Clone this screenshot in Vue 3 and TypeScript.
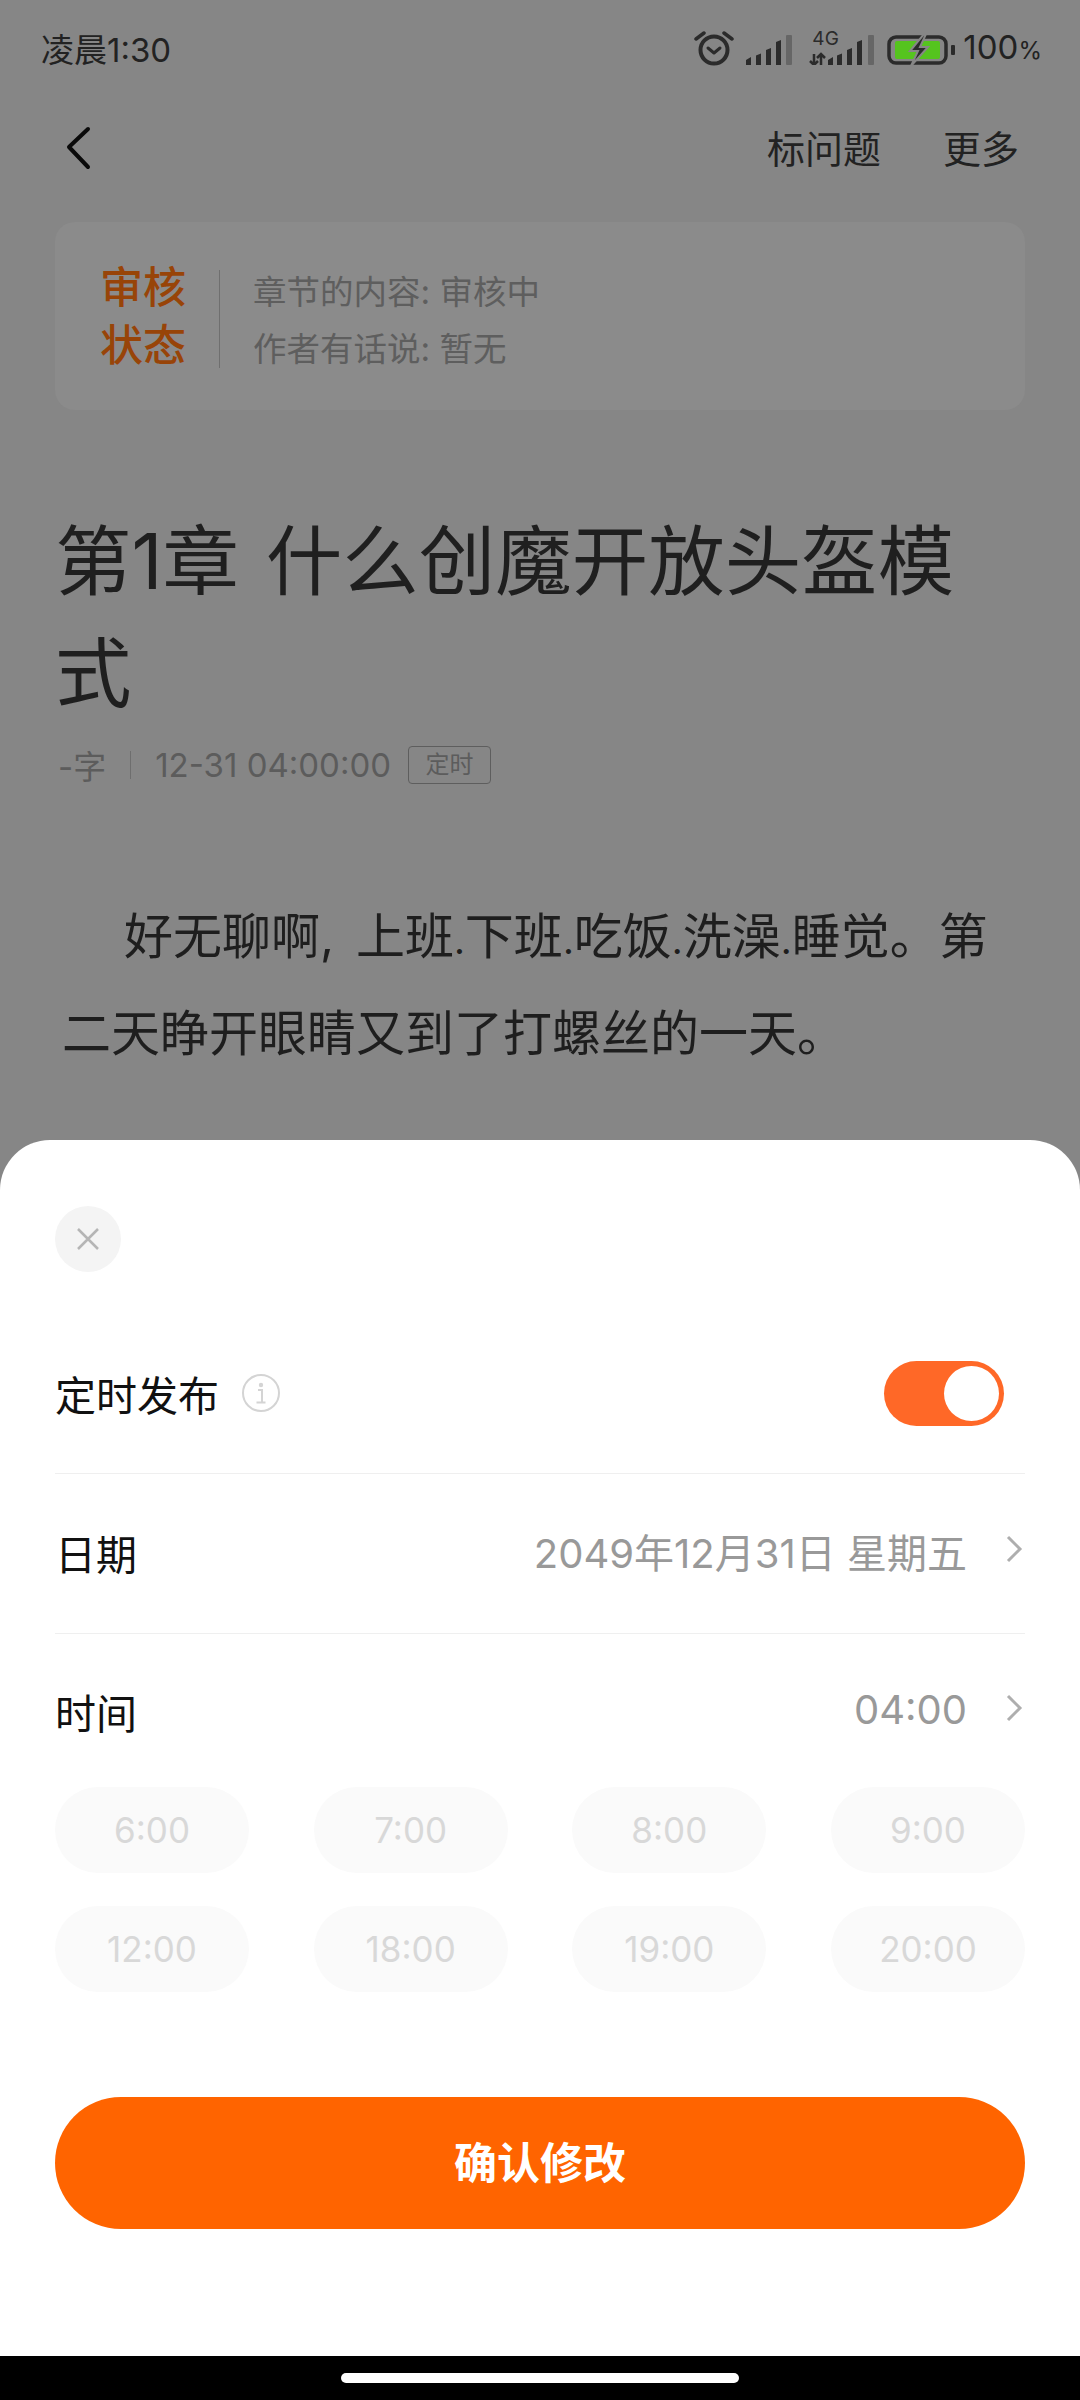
<template>
  <div class="screen">
    <div class="page">
      <div class="status">
        <span class="clock">凌晨1:30</span>
        <div class="status-icons">
          <svg class="alarm" width="40" height="36" viewBox="0 0 40 36">
            <circle cx="20" cy="20" r="13.500" fill="none" stroke="#2b2b2b" stroke-width="4" />
            <path d="M14 18l6 5 6-5" fill="none" stroke="#2b2b2b" stroke-width="3" stroke-linecap="round" stroke-linejoin="round" />
            <path d="M2 9l8-6M38 9l-8-6" fill="none" stroke="#2b2b2b" stroke-width="3.500" stroke-linecap="round" />
          </svg>
          <svg class="bars" width="48" height="30" viewBox="0 0 48 30">
            <path d="M1 25l5-3v8H1zM11 20.500l5-2V30h-5zM21 15l5-2v17h-5zM31 7l5-2v25h-5z" fill="#2b2b2b" />
            <rect x="41" y="0" width="6" height="30" rx="1" fill="#666" />
          </svg>
          <div class="net">
            <span class="net-label">4G</span>
            <svg class="net-bars" width="66" height="30" viewBox="0 0 66 30">
              <path d="M5 19v11M1 26l4 4 4-4M12 30V19M8 23l4-4 4 4" fill="none" stroke="#2b2b2b" stroke-width="2.500" />
              <path d="M19 25l5-3v8h-5zM28 20.500l5-2V30h-5zM38 15l5-2v17h-5zM48 7l5-2v25h-5z" fill="#2b2b2b" />
              <rect x="59" y="0" width="6" height="30" rx="1" fill="#666" />
            </svg>
          </div>
          <svg class="battery" width="68" height="32" viewBox="0 -1 68 32">
            <rect x="2" y="2" width="57" height="26" rx="7" fill="none" stroke="#2b2b2b" stroke-width="3.500" />
            <rect x="8" y="6" width="45" height="18" rx="2" fill="#55c41e" />
            <path d="M37 -1L23 16h8l-7 15 17-19h-8l6-13z" fill="#2b2b2b" stroke="#868686" stroke-width="2" />
            <rect x="64" y="10" width="4" height="10" rx="1" fill="#2b2b2b" />
          </svg>
          <span class="percent">100<small>%</small></span>
        </div>
      </div>

      <div class="nav">
        <svg class="back" width="28" height="44" viewBox="0 0 28 44">
          <path d="M24 3L5 21l19 20" fill="none" stroke="#0a0a0a" stroke-width="4" stroke-linecap="round" stroke-linejoin="round" />
        </svg>
        <div class="nav-actions">
          <span>标问题</span>
          <span>更多</span>
        </div>
      </div>

      <div class="review">
        <div class="review-label">审核<br />状态</div>
        <i class="review-sep"></i>
        <div class="review-lines">
          <div>章节的内容: 审核中</div>
          <div>作者有话说: 暂无</div>
        </div>
      </div>

      <h1 class="title">第1章 什么创魔开放头盔模<br />式</h1>

      <div class="meta">
        <span>-字</span>
        <i class="meta-sep"></i>
        <span>12-31 04:00:00</span>
        <span class="tag">定时</span>
      </div>

      <p class="para">好无聊啊, 上班<span class="dot">.</span>下班<span class="dot">.</span>吃饭<span class="dot">.</span>洗澡<span class="dot">.</span>睡觉。第<br />二天睁开眼睛又到了打螺丝的一天。</p>
      <p class="para next">闹钟响了又响，窗外的天还没有亮起来。</p>
    </div>

    <div class="sheet">
      <div class="close">
        <svg width="22" height="22" viewBox="0 0 22 22">
          <path d="M1 1l20 20M21 1L1 21" stroke="#b5b5b5" stroke-width="2.500" fill="none" />
        </svg>
      </div>

      <div class="row first">
        <div class="row-left">
          <span class="row-name">定时发布</span>
          <svg class="info" width="40" height="40" viewBox="0 0 40 40">
            <circle cx="20" cy="20" r="18" fill="none" stroke="#d4d4d4" stroke-width="2" />
            <circle cx="20" cy="12" r="2.200" fill="#d4d4d4" />
            <path d="M17 17h4v12M15.500 29.500h9" fill="none" stroke="#d4d4d4" stroke-width="2" />
          </svg>
        </div>
        <div class="switch"><div class="knob"></div></div>
      </div>

      <div class="row mid">
        <span class="row-name">日期</span>
        <div class="row-value">
          <span>2049年12月31日 星期五</span>
          <svg width="18" height="28" viewBox="0 0 18 28"><path d="M3 2l12 12L3 26" fill="none" stroke="#aeaeae" stroke-width="3" /></svg>
        </div>
      </div>

      <div class="row last">
        <span class="row-name">时间</span>
        <div class="row-value">
          <span>04:00</span>
          <svg width="18" height="28" viewBox="0 0 18 28"><path d="M3 2l12 12L3 26" fill="none" stroke="#aeaeae" stroke-width="3" /></svg>
        </div>
      </div>

      <div class="chips">
        <div v-for="t in times" :key="t" class="chip">{{ t }}</div>
      </div>

      <div class="confirm">确认修改</div>
    </div>

    <div class="home-bar"><div class="home-pill"></div></div>
  </div>
</template>

<script setup lang="ts">
const times: string[] = ['6:00', '7:00', '8:00', '9:00', '12:00', '18:00', '19:00', '20:00']
</script>

<style>
html, body { margin: 0; background: #000; }
</style>

<style scoped>
.screen {
  position: relative;
  width: 1080px;
  height: 2400px;
  overflow: hidden;
  background: #868686;
  font-family: Inter, "Noto Sans CJK SC", sans-serif;
}
.status {
  height: 100px;
  padding: 0 38px 0 41px;
  display: flex;
  align-items: center;
  justify-content: space-between;
  color: #222;
}
.clock { font-size: 33px; margin-top: -4px; }
.status-icons { display: flex; align-items: center; }
.alarm { margin-right: 11px; margin-top: -4px; }
.bars { margin-right: 16px; }
.net { position: relative; display: flex; margin-right: 12px; }
.net-label { position: absolute; left: 3px; top: -7px; font-size: 19px; line-height: 22px; color: #2b2b2b; }
.battery { margin-right: 8px; }
.percent { font-size: 33px; line-height: 34px; margin-top: -2px; }
.percent small { font-size: 24px; }
.nav {
  height: 98px;
  padding: 0 61px 0 64px;
  display: flex;
  align-items: center;
  justify-content: space-between;
}
.back { margin-top: -2px; }
.nav-actions { display: flex; gap: 62px; font-size: 38px; color: #222; margin-top: -6px; }
.review {
  margin: 24px 55px 0;
  height: 188px;
  padding-left: 45px;
  box-sizing: border-box;
  background: #8b8b8b;
  border-radius: 20px;
  display: flex;
  align-items: center;
}
.review-label {
  font-family: "Liberation Serif", "Noto Sans CJK SC", serif;
  font-size: 43px;
  line-height: 58px;
  font-weight: 500;
  color: #984408;
  padding-top: 3px;
}
.review-sep { width: 1px; height: 98px; background: #6f6f6f; margin: 6px 33px 0; }
.review-lines {
  padding-top: 9px;
  font-size: 33.500px;
  line-height: 57px;
  color: #5e5e5e;
}
.title {
  margin: 95px 0 0 55px;
  font-size: 76.500px;
  line-height: 112px;
  font-weight: 400;
  word-spacing: 5px;
  color: #1f1f1f;
}
.meta {
  margin: 17px 0 0 58px;
  height: 38px;
  display: flex;
  align-items: center;
  font-size: 33px;
  color: #5c5c5c;
}
.meta-sep { width: 1px; height: 28px; background: #6e6e6e; margin: 0 24px; }
.tag {
  margin-left: 17px;
  width: 83px;
  height: 38px;
  box-sizing: border-box;
  border: 1px solid #5e5e5e;
  border-radius: 4px;
  font-size: 24px;
  line-height: 36px;
  text-align: center;
}
.para {
  margin: 106px 0 0 62px;
  font-size: 49px;
  line-height: 94px;
  text-indent: 62px;
  word-spacing: 8px;
  color: #1e1e1e;
}
.dot { font-size: 38px; }
.para.next { margin-top: 41px; }
.sheet {
  position: absolute;
  left: 0;
  right: 0;
  top: 1140px;
  bottom: 44px;
  padding: 66px 55px 0;
  background: #fff;
  border-radius: 50px 50px 0 0;
}
.close {
  width: 66px;
  height: 66px;
  border-radius: 50%;
  background: #f4f4f4;
  display: flex;
  align-items: center;
  justify-content: center;
}
.row {
  height: 160px;
  display: flex;
  align-items: center;
  justify-content: space-between;
  border-bottom: 1px solid #efefef;
  box-sizing: border-box;
}
.row.first { margin-top: 41px; height: 161px; }
.row.last { border-bottom: 0; height: 153px; }
.row.mid > * { margin-top: -3px; }
.row-left { display: flex; align-items: center; gap: 22px; }
.row-name { font-size: 41px; color: #111; }
.row-value { display: flex; align-items: center; gap: 38px; font-size: 40px; color: #999; padding-right: 2px; }
.row-value span { margin-top: -3px; }
.row-value svg { margin-top: -6px; }
.switch {
  width: 120px;
  height: 65px;
  margin-right: 21px;
  border-radius: 33px;
  background: #ff6827;
  position: relative;
}
.knob {
  position: absolute;
  right: 5px;
  top: 5px;
  width: 55px;
  height: 55px;
  border-radius: 50%;
  background: #fff;
}
.chips {
  display: grid;
  grid-template-columns: repeat(4, 194px);
  justify-content: space-between;
  row-gap: 33px;
}
.chip {
  height: 86px;
  border-radius: 43px;
  background: #fafafa;
  color: #d8d8d8;
  font-size: 35px;
  line-height: 86px;
  text-align: center;
}
.confirm {
  margin-top: 105px;
  height: 132px;
  border-radius: 66px;
  background: #ff6400;
  color: #fff;
  font-size: 43px;
  font-weight: 700;
  line-height: 132px;
  text-align: center;
}
.home-bar {
  position: absolute;
  left: 0;
  right: 0;
  bottom: 0;
  height: 44px;
  background: #000;
  display: flex;
  justify-content: center;
  padding-top: 17px;
  box-sizing: border-box;
}
.home-pill { width: 398px; height: 10px; border-radius: 5px; background: #fff; }
</style>
